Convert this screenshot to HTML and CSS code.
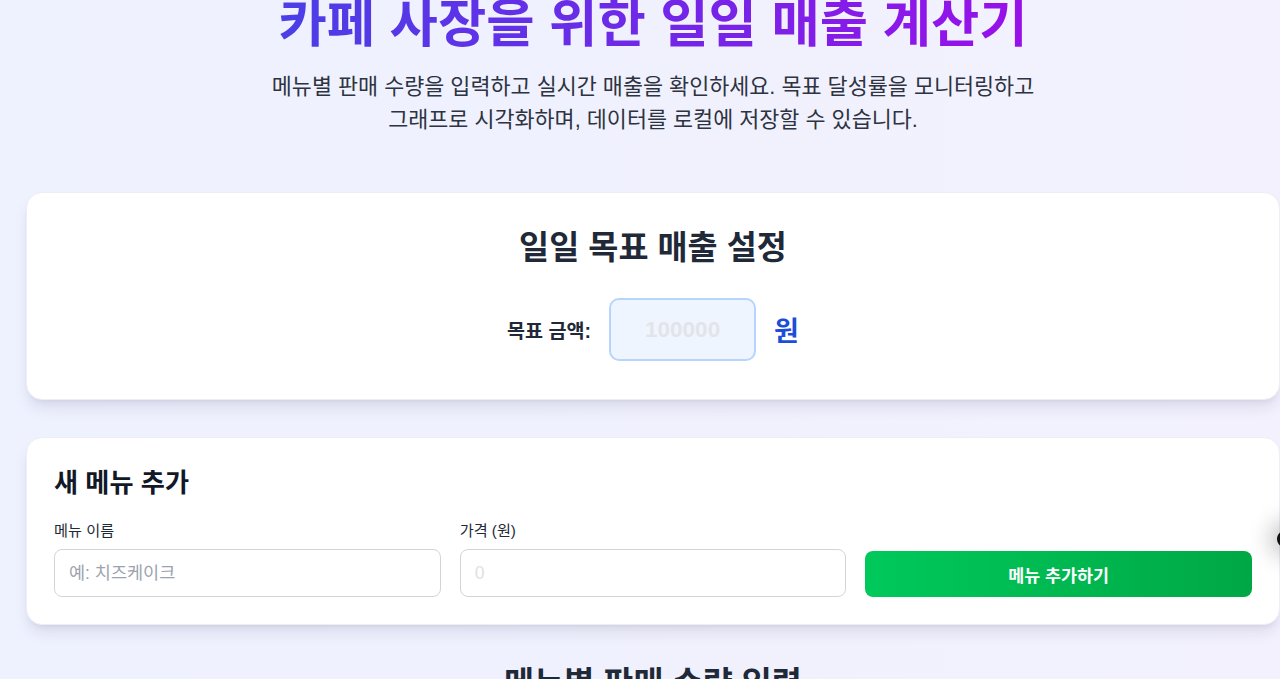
FILE: index.html
```html
<!DOCTYPE html>
<html lang="ko">
<head>
<meta charset="utf-8">
<title>카페 사장을 위한 일일 매출 계산기</title>
<link rel="stylesheet" href="styles.css">
</head>
<body>
<div class="page">
  <header class="hero">
    <h1 class="title"><span class="title-text">카페 사장을 위한 일일 매출 계산기</span></h1>
    <p class="subtitle">메뉴별 판매 수량을 입력하고 실시간 매출을 확인하세요. 목표 달성률을 모니터링하고<br>그래프로 시각화하며, 데이터를 로컬에 저장할 수 있습니다.</p>
  </header>

  <section class="card goal-card">
    <h2 class="card-title">일일 목표 매출 설정</h2>
    <div class="goal-row">
      <label class="goal-label" for="goal">목표 금액:</label>
      <input id="goal" class="goal-input" type="text" placeholder="100000">
      <span class="goal-unit">원</span>
    </div>
  </section>

  <section class="card add-card">
    <h3 class="add-title">새 메뉴 추가</h3>
    <div class="add-grid">
      <div class="field">
        <label class="field-label" for="name">메뉴 이름</label>
        <input id="name" class="field-input" type="text" placeholder="예: 치즈케이크">
      </div>
      <div class="field">
        <label class="field-label" for="price">가격 (원)</label>
        <input id="price" class="field-input field-input--light" type="text" placeholder="0">
      </div>
      <button class="add-btn" type="button">메뉴 추가하기</button>
    </div>
  </section>

  <h2 class="section-title">메뉴별 판매 수량 입력</h2>
</div>
<div class="floating-dot"></div>
</body>
</html>
```

FILE: styles.css
```css
* { box-sizing: border-box; }

html, body {
  margin: 0;
  padding: 0;
  height: 100%;
}

body {
  background: linear-gradient(to right, #eef1fe, #f3f1fe);
  font-family: "Liberation Sans", "Noto Sans CJK KR", sans-serif;
  color: #1f2937;
  overflow: hidden;
}

.page {
  width: 1254px;
  margin-left: 26px;
  padding-top: 0;
}

.hero {
  text-align: center;
  margin-bottom: 56px;
}

.title {
  margin: 0;
  font-size: 52.5px;
  line-height: 48px;
  font-weight: 700;
}

.title-text {
  background: linear-gradient(to right, #4a3fe6, #9810e9);
  -webkit-background-clip: text;
  background-clip: text;
  color: transparent;
}

.subtitle {
  margin: 22px 0 0;
  font-size: 21.8px;
  line-height: 33px;
  color: #2d3340;
}

.card {
  background: #ffffff;
  border: 1px solid #eceef4;
  border-radius: 16px;
  box-shadow: 0 10px 15px -3px rgba(30, 30, 70, 0.1), 0 4px 6px -4px rgba(30, 30, 70, 0.1);
}

.goal-card {
  padding: 37px 32px 38px;
  text-align: center;
}

.card-title {
  margin: 0 0 32px;
  font-size: 32.7px;
  line-height: 36px;
  font-weight: 700;
  color: #1f2937;
}

.goal-row {
  display: flex;
  justify-content: center;
  align-items: center;
  gap: 18px;
}

.goal-label {
  font-size: 19.6px;
  font-weight: 600;
  color: #1f2937;
}

.goal-input {
  width: 147px;
  height: 63px;
  border: 2px solid #b7d5fc;
  border-radius: 10px;
  background: #eef5ff;
  text-align: center;
  font-family: inherit;
  font-size: 22.5px;
  font-weight: 700;
  outline: none;
}

.goal-input::placeholder { color: #e3e4e8; }

.goal-unit {
  font-size: 27px;
  font-weight: 700;
  color: #1d4ed8;
}

.add-card {
  margin-top: 37px;
  padding: 29px 27px 27px;
}

.add-title {
  margin: 0 0 22px;
  font-size: 26.2px;
  line-height: 32px;
  font-weight: 700;
  color: #111827;
}

.add-grid {
  display: grid;
  grid-template-columns: 1fr 1fr 1fr;
  gap: 19px;
  align-items: end;
}

.field {
  display: flex;
  flex-direction: column;
}

.field-label {
  font-size: 15.2px;
  line-height: 20px;
  margin-bottom: 8px;
  color: #1f2937;
}

.field-input {
  height: 48px;
  border: 1px solid #d1d5db;
  border-radius: 8px;
  padding: 0 14px;
  font-family: inherit;
  font-size: 17.5px;
  background: #fff;
  outline: none;
}

.field-input::placeholder { color: #9ca3af; }
.field-input--light::placeholder { color: #e0e1e5; }

.add-btn {
  height: 46px;
  border: none;
  border-radius: 8px;
  background: linear-gradient(to right, #00c95c, #00a845);
  color: #ffffff;
  font-family: inherit;
  font-size: 17.4px;
  font-weight: 700;
}

.section-title {
  margin: 41px 0 0;
  text-align: center;
  font-size: 32.7px;
  line-height: 36px;
  font-weight: 700;
  color: #1f2937;
}

.floating-dot {
  position: fixed;
  left: 1277px;
  top: 528px;
  width: 30px;
  height: 22px;
  border-radius: 50%;
  background: #111;
  box-shadow: 0 0 22px 8px rgba(0, 0, 0, 0.22);
}
```
